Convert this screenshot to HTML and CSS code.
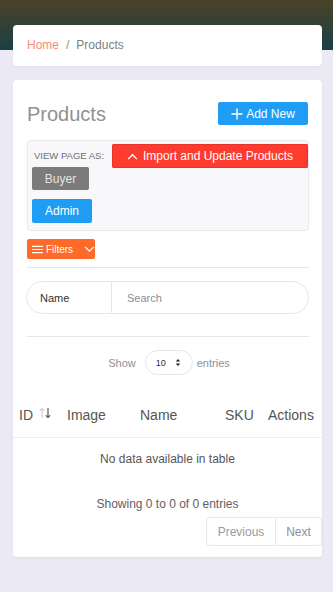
FILE: index.html
```html
<!DOCTYPE html>
<html>
<head>
<meta charset="utf-8">
<link rel="stylesheet" href="styles.css">
</head>
<body>
<div class="page">
  <nav class="crumb-card">
    <a class="crumb-home">Home</a>
    <span class="crumb-sep">/</span>
    <span class="crumb-cur">Products</span>
  </nav>

  <section class="card">
    <div class="title-row">
      <h1 class="title">Products</h1>
      <button class="btn btn-blue btn-add"><svg class="ic-plus" viewBox="0 0 12 12" width="12" height="12"><path d="M6 0.5V11.5M0.5 6H11.5" stroke="#fff" stroke-width="1.4" fill="none"/></svg>Add New</button>
    </div>

    <div class="view-box">
      <div class="view-row">
        <span class="view-label">VIEW PAGE AS:</span>
        <button class="btn btn-red btn-import"><svg viewBox="0 0 12 8" width="11" height="7"><path d="M1 7L6 2L11 7" stroke="#fff" stroke-width="1.5" fill="none"/></svg>Import and Update Products</button>
      </div>
      <button class="btn btn-gray btn-buyer">Buyer</button>
      <button class="btn btn-blue btn-admin">Admin</button>
    </div>

    <button class="btn btn-orange btn-filters"><svg viewBox="0 0 12 10" width="11" height="9"><path d="M0 1.5H12M0 5H12M0 8.5H12" stroke="#fff" stroke-width="1.2" fill="none"/></svg>Filters<svg class="chev" viewBox="0 0 12 8" width="11" height="7"><path d="M1 1L6 6L11 1" stroke="#fff" stroke-width="1.4" fill="none"/></svg></button>

    <hr class="rule rule-1">

    <div class="search">
      <span class="search-field">Name</span>
      <span class="search-input">Search</span>
    </div>

    <hr class="rule rule-2">

    <div class="length">
      <span>Show</span>
      <span class="select"><span class="sel-val">10</span><svg viewBox="0 0 6 10" width="6" height="9"><path d="M0.5 4L3 1L5.5 4ZM0.5 6L3 9L5.5 6Z" fill="#222"/></svg></span>
      <span>entries</span>
    </div>

    <div class="table">
      <div class="thead">
        <div class="th th-id">ID<span class="sort"><svg viewBox="0 0 12 12" width="12" height="12"><path d="M3 11V1.5M0.8 3.7L3 1.5L5.2 3.7" stroke="#cfcfd4" stroke-width="1.2" fill="none"/><path d="M9 1V10.5M6.8 8.3L9 10.5L11.2 8.3" stroke="#555" stroke-width="1.2" fill="none"/></svg></span></div>
        <div class="th">Image</div>
        <div class="th">Name</div>
        <div class="th">SKU</div>
        <div class="th">Actions</div>
      </div>
      <div class="empty">No data available in table</div>
    </div>

    <div class="info">Showing 0 to 0 of 0 entries</div>

    <div class="pager">
      <span class="pg pg-prev">Previous</span>
      <span class="pg pg-next">Next</span>
    </div>
  </section>
</div>
</body>
</html>
```

FILE: styles.css
```css
* { box-sizing: border-box; }
html, body { margin: 0; padding: 0; }
body {
  font-family: "Liberation Sans", Arial, sans-serif;
  background: linear-gradient(180deg, #4b4227 0%, #1a3f47 100%) no-repeat top left / 100% 50px, #ebe9f3;
  min-height: 592px;
}
.page { padding: 25px 11px 0 13px; }

.crumb-card {
  background: #fff;
  border-radius: 4px;
  height: 41px;
  display: flex;
  align-items: center;
  padding: 0 0 2px 14px;
  font-size: 12px;
  box-shadow: 0 1px 2px rgba(0,0,0,0.04);
}
.crumb-home { color: #fb8a6f; }
.crumb-sep { color: #8a8f98; margin: 0 7px; }
.crumb-cur { color: #7a7f88; }

.card {
  background: #fff;
  border-radius: 4px;
  margin-top: 14px;
  padding: 22px 13px 11px 14px;
  box-shadow: 0 1px 3px rgba(0,0,0,0.06);
}

.btn {
  border: none;
  font-family: inherit;
  color: #fff;
  border-radius: 2px;
  display: inline-flex;
  align-items: center;
  justify-content: center;
  padding: 0;
  cursor: pointer;
}
.btn-blue { background: #1f9df4; }
.btn-red { background: #fd3b2e; box-shadow: inset 0 0 0 1px #e8332a; }
.btn-gray { background: #7b7b7b; color: #e4e4e4; }
.btn-orange { background: #ff6a28; }

.title-row { display: flex; justify-content: space-between; align-items: flex-start; }
.title {
  margin: 1px 0 0;
  font-weight: normal;
  font-size: 20px;
  color: #919191;
  line-height: 22px;
}
.btn-add { width: 90px; height: 23px; font-size: 12px; gap: 3px; margin-right: 1px; }

.view-box {
  margin-top: 15px;
  background: #f8f8fb;
  border: 1px solid #e9e9ef;
  border-radius: 3px;
  padding: 3px 0 7px 4px;
  display: flex;
  flex-direction: column;
  align-items: flex-start;
}
.view-row { display: flex; width: 100%; align-items: flex-start; }
.view-label { font-size: 9.5px; color: #6d6f75; margin: 6px 0 0 2px; }
.btn-import { margin-left: auto; width: 196px; height: 24px; font-size: 12px; gap: 5px; }
.btn-buyer { width: 57px; height: 23px; font-size: 12px; margin-top: -1px; }
.btn-admin { width: 60px; height: 24px; font-size: 12px; margin-top: 9px; }

.btn-filters {
  margin-top: 8px;
  width: 68px;
  height: 20px;
  font-size: 10px;
  gap: 3px;
  justify-content: flex-start;
  padding-left: 5px;
}
.btn-filters .chev { margin-left: 8px; }

.rule { border: none; border-top: 1px solid #e6e6ea; margin: 0; }
.rule-1 { margin-top: 8px; }
.rule-2 { margin-top: 22px; }

.search {
  margin: 13px 0 0 -1px;
  height: 33px;
  border: 1px solid #e6e6ec;
  border-radius: 17px;
  display: flex;
  align-items: stretch;
  font-size: 11px;
}
.search-field {
  width: 85px;
  display: flex;
  align-items: center;
  padding-left: 13px;
  color: #333;
  border-right: 1px solid #e6e6ec;
}
.search-input { display: flex; align-items: center; padding-left: 15px; color: #8a8d94; }

.length {
  margin-top: 13px;
  display: flex;
  justify-content: center;
  align-items: center;
  font-size: 11px;
  color: #8e9096;
  padding-left: 2px;
}
.select {
  width: 48px;
  height: 25px;
  border: 1px solid #e6e6ec;
  border-radius: 13px;
  display: inline-flex;
  align-items: center;
  padding: 0 0 0 10px;
  gap: 9px;
  margin: 0 4px 0 9px;
}
.sel-val { font-size: 9px; color: #2a2a55; }

.table { margin: 17px -13px 0 -14px; }
.thead {
  display: grid;
  grid-template-columns: 48px 73px 85px 43px 60px;
  height: 46px;
  align-items: center;
  border-bottom: 1px solid #eeeef2;
  font-size: 14px;
  color: #555;
  padding-top: 1px;
}
.th { padding-left: 6px; white-space: nowrap; display: flex; align-items: center; }
.sort { display: inline-flex; margin-left: 6px; margin-top: -4px; }
.empty {
  text-align: center;
  font-size: 12px;
  color: #555;
  padding: 14px 0;
}

.info {
  margin-top: 17px;
  text-align: center;
  font-size: 12px;
  color: #5f6066;
  padding-right: 1px;
}
.pager {
  margin: 6px -13px 0 0;
  display: flex;
  justify-content: flex-end;
}
.pg {
  height: 29px;
  display: flex;
  align-items: center;
  justify-content: center;
  font-size: 12px;
  color: #9a9ba2;
  border: 1px solid #e8e8ee;
}
.pg-prev { width: 70px; border-radius: 3px 0 0 3px; }
.pg-next { width: 46px; border-left: none; border-radius: 0 3px 3px 0; color: #8e9098; }
```
